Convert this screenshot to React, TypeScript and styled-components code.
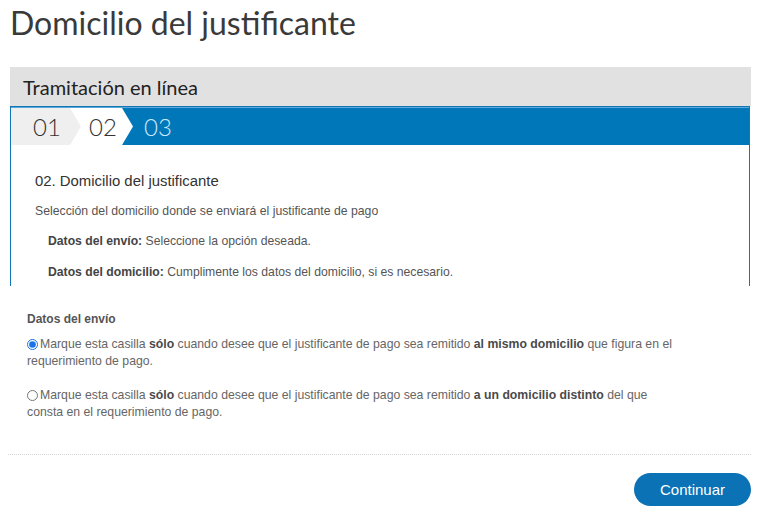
import React from 'react';
import styled, { createGlobalStyle } from 'styled-components';

const GlobalStyle = createGlobalStyle`
  body {
    margin: 0;
    background: #ffffff;
    font-family: "Liberation Sans", Arial, sans-serif;
  }
`;

const Page = styled.div`
  padding: 0 17px 0 10px;
`;

const Title = styled.h1`
  margin: 0;
  padding-top: 3px;
  height: 64px;
  font-family: Lato, "Open Sans", sans-serif;
  font-weight: 400;
  font-size: 32px;
  line-height: 40px;
  color: #3a3a3a;
`;

const PanelHeader = styled.div`
  height: 39px;
  display: flex;
  align-items: center;
  padding-left: 13px;
  background: #e1e1e1;
  font-family: Lato, "Open Sans", sans-serif;
  font-size: 20px;
  color: #222222;
`;

const Panel = styled.div`
  border: 1px solid #1176b6;
  border-bottom: none;
  margin-right: 1px;
`;

const StepBar = styled.div`
  display: flex;
  height: 37px;
  background: #0077b9;
  border-top: 1px solid #5aa9da;
`;

const Step = styled.div<{ $bg: string; $color: string; $width: number; $pad: number; $layer: number }>`
  position: relative;
  z-index: ${(p) => p.$layer};
  width: ${(p) => p.$width}px;
  margin-right: -11px;
  padding-left: ${(p) => p.$pad}px;
  box-sizing: border-box;
  display: flex;
  align-items: center;
  background: ${(p) => p.$bg};
  color: ${(p) => p.$color};
  font-family: Lato, "Open Sans", sans-serif;
  font-weight: 300;
  font-size: 24px;
  clip-path: polygon(0 0, calc(100% - 11px) 0, 100% 50%, calc(100% - 11px) 100%, 0 100%);
`;

const StepCurrent = styled.div`
  display: flex;
  align-items: center;
  padding-left: 22px;
  color: #cde9f9;
  font-family: Lato, "Open Sans", sans-serif;
  font-weight: 300;
  font-size: 24px;
`;

const PanelBody = styled.div`
  padding: 28px 24px 8px 24px;
  height: 105px;
`;

const SectionTitle = styled.div`
  font-size: 14.9px;
  color: #333333;
  margin-bottom: 15px;
`;

const Lead = styled.div`
  font-size: 12.25px;
  color: #555555;
  margin-bottom: 16px;
`;

const InfoLine = styled.div`
  font-size: 12.2px;
  color: #555555;
  padding-left: 13px;
  margin-bottom: 17px;

  b {
    color: #444444;
  }
`;

const Form = styled.div`
  padding: 26px 0 0 17px;
`;

const Label = styled.div`
  font-size: 12px;
  font-weight: bold;
  color: #555555;
  margin-bottom: 10px;
`;

const Option = styled.label`
  display: block;
  font-size: 12.25px;
  line-height: 17px;
  color: #666666;
  margin-bottom: 17px;

  b {
    color: #4a4a4a;
  }
`;

const Radio = styled.input`
  width: 11px;
  height: 11px;
  margin: 0 2px 0 0;
  vertical-align: -2px;
  accent-color: #1a73e8;
`;

const Divider = styled.hr`
  border: none;
  border-top: 1px dotted #d4d4d4;
  margin: 33px 0 0 -2px;
`;

const Actions = styled.div`
  display: flex;
  justify-content: flex-end;
  padding-top: 18px;
`;

const Button = styled.button`
  width: 117px;
  height: 33px;
  border: none;
  border-radius: 17px;
  background: #0a72b5;
  color: #ffffff;
  font-family: "Liberation Sans", Arial, sans-serif;
  font-size: 15px;
  cursor: pointer;
`;

export default function App() {
  return (
    <Page>
      <GlobalStyle />
      <Title>Domicilio del justificante</Title>
      <PanelHeader>Tramitación en línea</PanelHeader>
      <Panel>
        <StepBar>
          <Step $bg="#efefef" $color="#333333" $width={70} $pad={22} $layer={2}>01</Step>
          <Step $bg="#ffffff" $color="#333333" $width={63} $pad={19} $layer={1}>02</Step>
          <StepCurrent>03</StepCurrent>
        </StepBar>
        <PanelBody>
          <SectionTitle>02. Domicilio del justificante</SectionTitle>
          <Lead>Selección del domicilio donde se enviará el justificante de pago</Lead>
          <InfoLine><b>Datos del envío:</b> Seleccione la opción deseada.</InfoLine>
          <InfoLine><b>Datos del domicilio:</b> Cumplimente los datos del domicilio, si es necesario.</InfoLine>
        </PanelBody>
      </Panel>
      <Form>
        <Label>Datos del envío</Label>
        <Option>
          <Radio type="radio" name="envio" defaultChecked />
          Marque esta casilla <b>sólo</b> cuando desee que el justificante de pago sea remitido <b>al mismo domicilio</b> que figura en el
          <br />
          requerimiento de pago.
        </Option>
        <Option>
          <Radio type="radio" name="envio" />
          Marque esta casilla <b>sólo</b> cuando desee que el justificante de pago sea remitido <b>a un domicilio distinto</b> del que
          <br />
          consta en el requerimiento de pago.
        </Option>
      </Form>
      <Divider />
      <Actions>
        <Button>Continuar</Button>
      </Actions>
    </Page>
  );
}
